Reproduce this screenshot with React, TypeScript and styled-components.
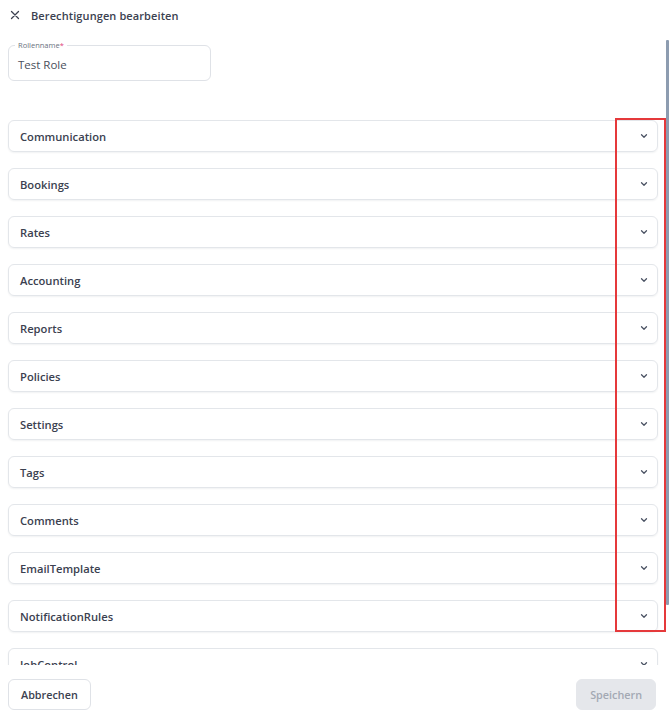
import React from "react";
import styled, { createGlobalStyle } from "styled-components";

const Global = createGlobalStyle`
  html, body { margin: 0; padding: 0; background: #fff; }
  body { font-family: "Open Sans", "Noto Sans", sans-serif; color: #3b4150; }
  * { box-sizing: border-box; }
`;

const Page = styled.div`
  position: relative;
  width: 670px;
  height: 716px;
  display: flex;
  flex-direction: column;
  overflow: hidden;
  background: #fff;
`;

const Header = styled.div`
  height: 30px;
  display: flex;
  align-items: center;
  gap: 10px;
  padding: 0 0 0 9px;
  flex-shrink: 0;
`;

const CloseBtn = styled.span`
  width: 12px;
  height: 12px;
  display: flex;
  align-items: center;
  justify-content: center;
  color: #3b4150;
`;

const Title = styled.h1`
  margin: 0;
  font-size: 11px;
  font-weight: 600;
  color: #3b4150;
  letter-spacing: 0.1px;
`;

const Scroll = styled.div`
  flex: 1;
  min-height: 0;
  overflow: hidden;
  padding: 15px 12px 0 8px;
  display: flex;
  flex-direction: column;
`;

const Field = styled.div`
  position: relative;
  flex-shrink: 0;
  width: 203px;
  height: 36px;
  border: 1px solid #dfe2e7;
  border-radius: 6px;
  display: flex;
  align-items: center;
  padding: 2px 9px 0;
  font-size: 11.5px;
  color: #4a4f5c;
`;

const FieldLabel = styled.span`
  position: absolute;
  left: 6px;
  top: -6px;
  padding: 0 3px;
  background: #fff;
  font-size: 7.5px;
  color: #6b7280;
  line-height: 10px;
`;

const Req = styled.span`
  color: #e0457b;
`;

const List = styled.div`
  margin-top: 39px;
  display: flex;
  flex-direction: column;
  gap: 16px;
  flex-shrink: 0;
`;

const Item = styled.div`
  height: 32px;
  flex-shrink: 0;
  border: 1px solid #e3e6ea;
  border-radius: 6px;
  box-shadow: 0 1px 2px rgba(20, 30, 50, 0.06);
  display: flex;
  align-items: center;
  justify-content: space-between;
  padding: 0 8px 0 11px;
`;

const ItemTitle = styled.span`
  font-size: 11.2px;
  font-weight: 600;
  color: #3b4150;
`;

const Footer = styled.div`
  height: 51px;
  flex-shrink: 0;
  display: flex;
  align-items: flex-start;
  justify-content: space-between;
  padding: 14px 14px 0 8px;
  background: #fff;
`;

const Button = styled.button<{ $primary?: boolean }>`
  height: 31px;
  padding: 0 ${(p) => (p.$primary ? "13px" : "12px")};
  border-radius: 6px;
  font-family: inherit;
  font-size: 10.8px;
  font-weight: 600;
  border: 1px solid ${(p) => (p.$primary ? "#e5e7eb" : "#dfe2e7")};
  background: ${(p) => (p.$primary ? "#e5e7eb" : "#fff")};
  color: ${(p) => (p.$primary ? "#a3a9b3" : "#3b4150")};
`;

const ScrollThumb = styled.div`
  position: absolute;
  left: 666px;
  top: 40px;
  width: 3px;
  height: 565px;
  background: #8d9cb0;
  border-radius: 1px;
`;

const Highlight = styled.div`
  position: absolute;
  left: 615px;
  top: 118px;
  width: 51px;
  height: 514px;
  border: 2px solid #e5393b;
  pointer-events: none;
`;

const Chevron = () => (
  <svg width="10" height="10" viewBox="0 0 24 24" fill="none" stroke="#4a5263" strokeWidth="3" strokeLinecap="round" strokeLinejoin="round">
    <path d="M6 9l6 6 6-6" />
  </svg>
);

const sections = [
  "Communication",
  "Bookings",
  "Rates",
  "Accounting",
  "Reports",
  "Policies",
  "Settings",
  "Tags",
  "Comments",
  "EmailTemplate",
  "NotificationRules",
  "JobControl",
];

export default function App() {
  return (
    <Page>
      <Global />
      <Header>
        <CloseBtn>
          <svg width="10" height="10" viewBox="0 0 10 10" stroke="#3b4150" strokeWidth="1.3" strokeLinecap="round">
            <path d="M1.5 1.5l7 7M8.5 1.5l-7 7" />
          </svg>
        </CloseBtn>
        <Title>Berechtigungen bearbeiten</Title>
      </Header>
      <Scroll>
        <Field>
          <FieldLabel>
            Rollenname<Req>*</Req>
          </FieldLabel>
          Test Role
        </Field>
        <List>
          {sections.map((s) => (
            <Item key={s}>
              <ItemTitle>{s}</ItemTitle>
              <Chevron />
            </Item>
          ))}
        </List>
      </Scroll>
      <Footer>
        <Button>Abbrechen</Button>
        <Button $primary disabled>
          Speichern
        </Button>
      </Footer>
      <ScrollThumb />
      <Highlight />
    </Page>
  );
}
